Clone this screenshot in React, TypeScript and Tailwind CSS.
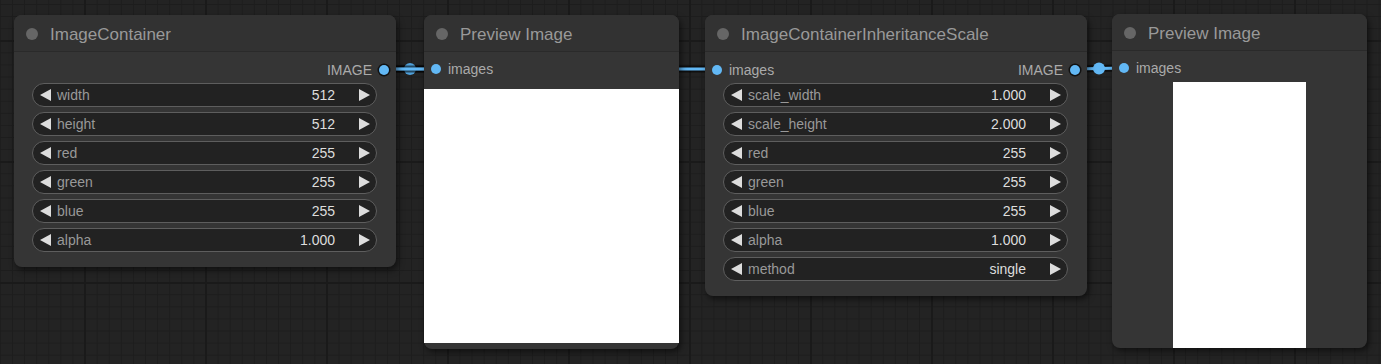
import React from 'react';

type Widget = { label: string; value: string };

const FONT = "font-['Liberation_Sans',Arial,sans-serif]";

const LeftArrow = () => (
  <svg width="11" height="12" viewBox="0 0 11 12" className="shrink-0">
    <path d="M11 0 L0 6 L11 12 Z" fill="#dddddd" />
  </svg>
);

const RightArrow = () => (
  <svg width="11" height="12" viewBox="0 0 11 12" className="shrink-0">
    <path d="M0 0 L11 6 L0 12 Z" fill="#dddddd" />
  </svg>
);

const WidgetRow: React.FC<{ w: Widget }> = ({ w }) => (
  <div className="h-6 flex items-center rounded-full border border-[#5e5e5e] bg-[#222222] pl-[7px] pr-[6px] text-[14px]">
    <LeftArrow />
    <span className="ml-[6px] text-[#999999]">{w.label}</span>
    <span className="ml-auto mr-[24px] text-[#dddddd]">{w.value}</span>
    <RightArrow />
  </div>
);

const Dot: React.FC<{ ring?: boolean }> = ({ ring }) => (
  <div
    className={`w-[10px] h-[10px] rounded-full bg-[#62b8f5] shrink-0 ${
      ring ? 'ring-[1.5px] ring-[#111]' : ''
    }`}
  />
);

const Title: React.FC<{ text: string }> = ({ text }) => (
  <div className="h-[37px] pt-[2px] flex items-center pl-[12px] border-b border-[#2a2a2a] bg-[#323232] rounded-t-[8px]">
    <div className="w-3 h-3 rounded-full bg-[#666666]" />
    <span className="ml-[12px] text-[17px] text-[#999999] leading-none">{text}</span>
  </div>
);

const ParamNode: React.FC<{
  className: string;
  title: string;
  input?: string;
  widgets: Widget[];
}> = ({ className, title, input, widgets }) => (
  <div className={`absolute w-[382px] rounded-[8px] bg-[#353535] shadow-[2px_3px_6px_rgba(0,0,0,0.55)] ${className}`}>
    <Title text={title} />
    <div className="h-5 mt-[8px] flex items-center px-[7px] text-[14px]">
      {input && (
        <>
          <Dot />
          <span className="ml-[7px] text-[#aaaaaa]">{input}</span>
        </>
      )}
      <span className="ml-auto mr-[7px] text-[#aaaaaa]">IMAGE</span>
      <Dot ring />
    </div>
    <div className="mt-[3px] pl-[18px] pr-[19px] pb-[15px] flex flex-col gap-[5px]">
      {widgets.map((w) => (
        <WidgetRow key={w.label} w={w} />
      ))}
    </div>
  </div>
);

const PreviewNode: React.FC<{ className: string; children: React.ReactNode }> = ({
  className,
  children,
}) => (
  <div className={`absolute w-[255px] rounded-[8px] bg-[#353535] shadow-[2px_3px_6px_rgba(0,0,0,0.55)] flex flex-col ${className}`}>
    <Title text="Preview Image" />
    <div className="h-5 mt-[7px] flex items-center px-[7px] text-[14px]">
      <Dot />
      <span className="ml-[7px] text-[#aaaaaa]">images</span>
    </div>
    {children}
  </div>
);

const Links = () => (
  <svg className="absolute inset-0" width="1381" height="364">
    {/* ImageContainer -> Preview Image */}
    <line x1="384" y1="69" x2="436" y2="69" stroke="rgba(0,0,0,0.55)" strokeWidth="7" />
    <line x1="384" y1="69" x2="436" y2="69" stroke="#62b8f5" strokeWidth="3" />
    <circle cx="410" cy="69" r="6" fill="#4f9fd8" />
    {/* ImageContainer -> InheritanceScale (runs behind preview) */}
    <line x1="384" y1="69" x2="717" y2="69" stroke="rgba(0,0,0,0.55)" strokeWidth="7" />
    <line x1="384" y1="69" x2="717" y2="69" stroke="#62b8f5" strokeWidth="3" />
    {/* InheritanceScale -> Preview Image */}
    <line x1="1075" y1="69" x2="1123" y2="68" stroke="rgba(0,0,0,0.55)" strokeWidth="7" />
    <line x1="1075" y1="69" x2="1123" y2="68" stroke="#62b8f5" strokeWidth="3" />
    <circle cx="1099" cy="68.5" r="6" fill="#62b8f5" />
  </svg>
);

const colors: Widget[] = [
  { label: 'red', value: '255' },
  { label: 'green', value: '255' },
  { label: 'blue', value: '255' },
  { label: 'alpha', value: '1.000' },
];

export default function App() {
  return (
    <div
      className={`relative w-[1381px] h-[364px] overflow-hidden bg-[#232323] ${FONT} bg-[linear-gradient(to_right,#1a1a1a_2px,transparent_2px),linear-gradient(to_bottom,#1a1a1a_2px,transparent_2px),linear-gradient(to_right,#1d1d1d_1px,transparent_1px),linear-gradient(to_bottom,#1d1d1d_1px,transparent_1px)] bg-[length:121px_121px,121px_121px,12.1px_12.1px,12.1px_12.1px] bg-[position:84px_40px,84px_40px,12px_4px,12px_4px]`}
    >
      <Links />

      <ParamNode
        className="left-[14px] top-[15px]"
        title="ImageContainer"
        widgets={[{ label: 'width', value: '512' }, { label: 'height', value: '512' }, ...colors]}
      />

      <PreviewNode className="left-[424px] top-[15px] h-[334px]">
        <div className="mt-[10px] h-[254px] bg-white" />
      </PreviewNode>

      <ParamNode
        className="left-[705px] top-[15px]"
        title="ImageContainerInheritanceScale"
        input="images"
        widgets={[
          { label: 'scale_width', value: '1.000' },
          { label: 'scale_height', value: '2.000' },
          ...colors,
          { label: 'method', value: 'single' },
        ]}
      />

      <PreviewNode className="left-[1112px] top-[14px] h-[334px]">
        <div className="mt-[4px] flex-1 flex justify-center">
          <div className="w-[133px] bg-white" />
        </div>
      </PreviewNode>
    </div>
  );
}
